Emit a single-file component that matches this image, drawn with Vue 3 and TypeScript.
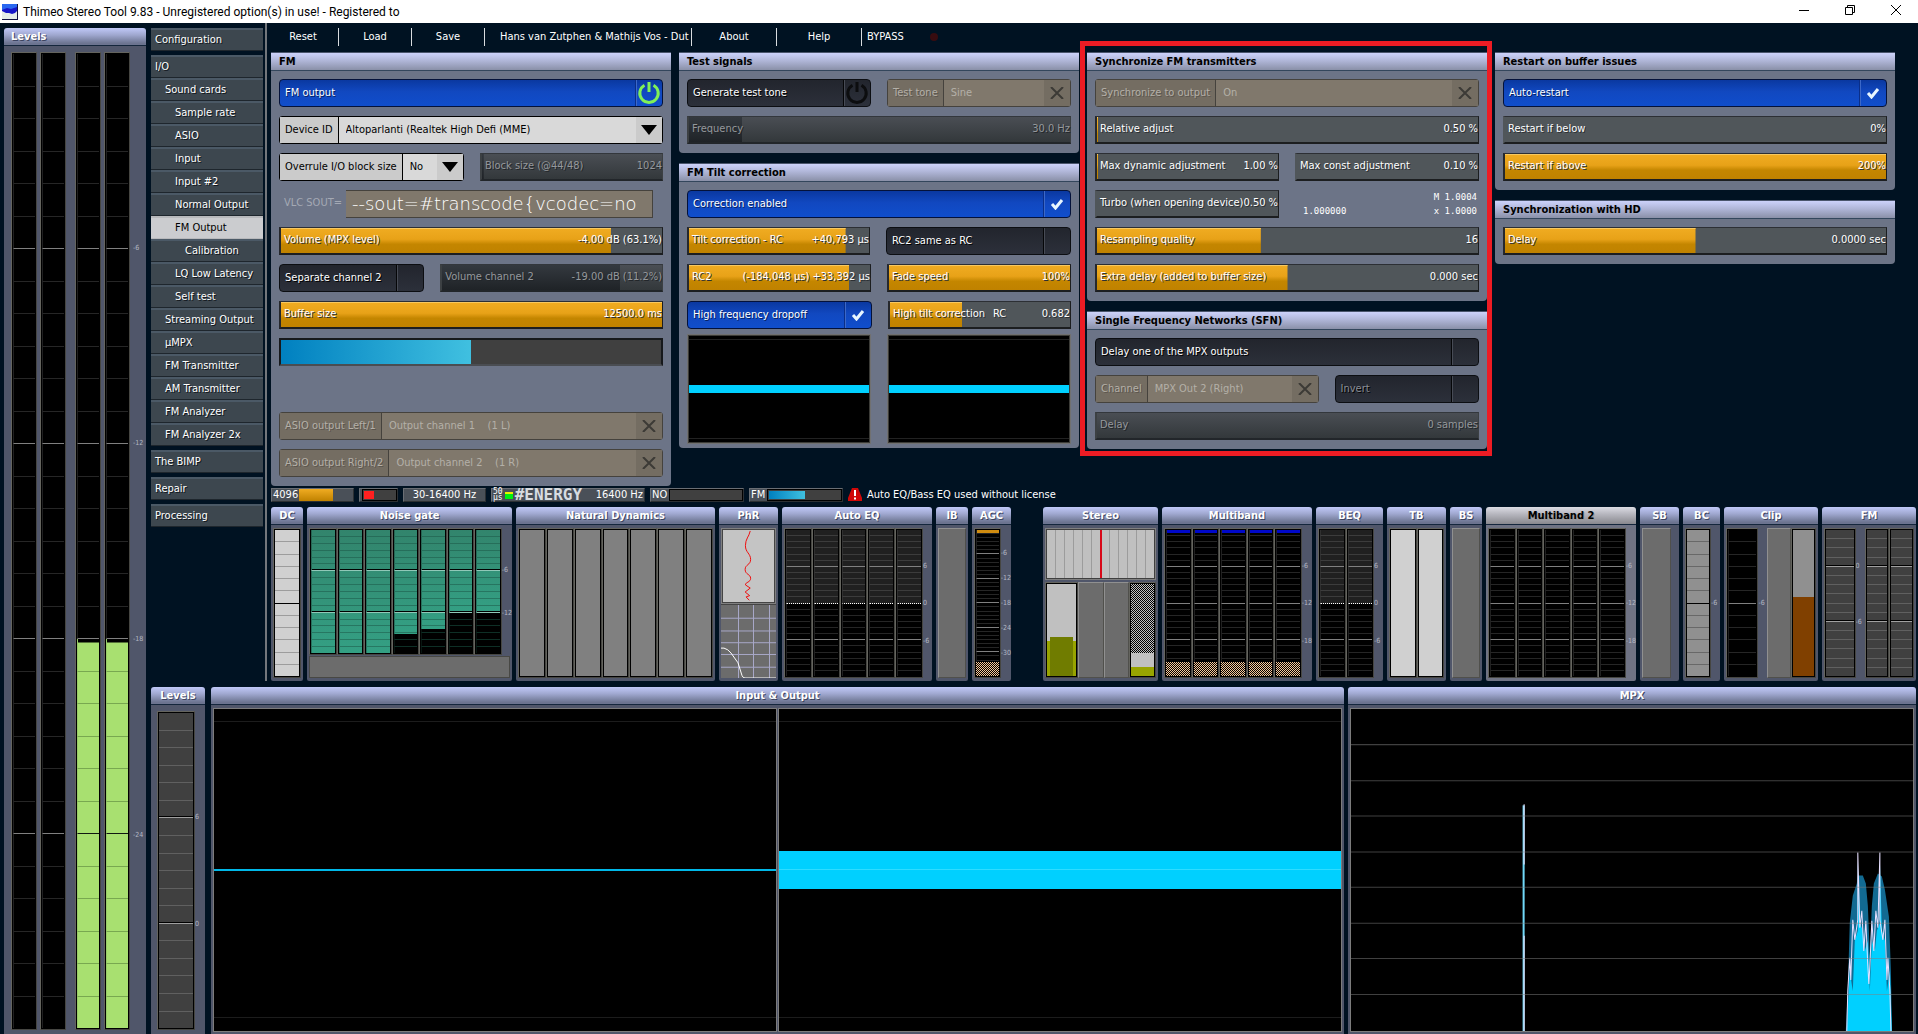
<script setup lang="ts">
interface NavItem { label: string; depth: number; gap?: boolean; active?: boolean }
interface Control {
  kind: 'toggle' | 'select' | 'slider' | 'progress' | 'blank' | 'graph' | 'vlc' | 'ratio'
  label?: string
  mid?: string
  value?: string
  span?: number
  fill?: number
  on?: boolean
  power?: boolean
  disabled?: boolean
}
interface Panel { title: string; rows: Control[][] }
interface Column {
  kind: 'meter' | 'scale' | 'flat' | 'space'
  look?: string
  cells?: number
  majors?: number[]
  level?: number
  hatch?: boolean
  grow?: number
  marks?: string[]
}
interface Strip { title: string; width: number; look?: string; gapAfter?: boolean; foot?: boolean; columns: Column[] }

const nav: NavItem[] = [
  { label: 'Configuration', depth: 0 },
  { label: 'I/O', depth: 0, gap: true },
  { label: 'Sound cards', depth: 1 },
  { label: 'Sample rate', depth: 2 },
  { label: 'ASIO', depth: 2 },
  { label: 'Input', depth: 2 },
  { label: 'Input #2', depth: 2 },
  { label: 'Normal Output', depth: 2 },
  { label: 'FM Output', depth: 2, active: true },
  { label: 'Calibration', depth: 3 },
  { label: 'LQ Low Latency', depth: 2 },
  { label: 'Self test', depth: 2 },
  { label: 'Streaming Output', depth: 1 },
  { label: 'µMPX', depth: 1 },
  { label: 'FM Transmitter', depth: 1 },
  { label: 'AM Transmitter', depth: 1 },
  { label: 'FM Analyzer', depth: 1 },
  { label: 'FM Analyzer 2x', depth: 1 },
  { label: 'The BIMP', depth: 0, gap: true },
  { label: 'Repair', depth: 0, gap: true },
  { label: 'Processing', depth: 0, gap: true },
]

const tools = [
  { label: 'Reset', size: 't-reset' },
  { label: 'Load', size: 't-load' },
  { label: 'Save', size: 't-load' },
  { label: 'Hans van Zutphen & Mathijs Vos - Dut', size: 't-name' },
  { label: 'About', size: 't-about' },
  { label: 'Help', size: 't-about' },
]

const boards: Panel[][] = [
  [
    {
      title: 'FM',
      rows: [
        [{ kind: 'toggle', label: 'FM output', on: true, power: true }],
        [{ kind: 'select', label: 'Device ID', value: 'Altoparlanti (Realtek High Defi (MME)' }],
        [
          { kind: 'select', label: 'Overrule I/O block size', value: 'No', span: 184 },
          { kind: 'slider', label: 'Block size (@44/48)', value: '1024', fill: 1, span: 184, disabled: true },
        ],
        [{ kind: 'vlc', label: 'VLC SOUT=', value: '--sout=#transcode{vcodec=no' }],
        [{ kind: 'slider', label: 'Volume (MPX level)', value: '-4.00 dB (63.1%)', fill: 86.6 }],
        [
          { kind: 'toggle', label: 'Separate channel 2', span: 144 },
          { kind: 'slider', label: 'Volume channel 2', value: '-19.00 dB (11.2%)', fill: 81, span: 224, disabled: true },
        ],
        [{ kind: 'slider', label: 'Buffer size', value: '12500.0 ms', fill: 100 }],
        [{ kind: 'progress', label: 'Buffer fill' }],
        [{ kind: 'blank' }],
        [{ kind: 'select', label: 'ASIO output Left/1', value: 'Output channel 1\u00a0\u00a0\u00a0 (1 L)', disabled: true }],
        [{ kind: 'select', label: 'ASIO output Right/2', value: 'Output channel 2\u00a0\u00a0\u00a0 (1 R)', disabled: true }],
      ],
    },
  ],
  [
    {
      title: 'Test signals',
      rows: [
        [
          { kind: 'toggle', label: 'Generate test tone', power: true, span: 184 },
          { kind: 'select', label: 'Test tone', value: 'Sine', span: 184, disabled: true },
        ],
        [{ kind: 'slider', label: 'Frequency', value: '30.0 Hz', fill: 14, disabled: true }],
      ],
    },
    {
      title: 'FM Tilt correction',
      rows: [
        [{ kind: 'toggle', label: 'Correction enabled', on: true }],
        [
          { kind: 'slider', label: 'Tilt correction - RC', value: '+40,793 µs', fill: 87, span: 184 },
          { kind: 'toggle', label: 'RC2 same as RC', span: 184 },
        ],
        [
          { kind: 'slider', label: 'RC2', value: '(-184,048 µs) +33,392 µs', fill: 88.6, span: 184 },
          { kind: 'slider', label: 'Fade speed', value: '100%', fill: 100, span: 184 },
        ],
        [
          { kind: 'toggle', label: 'High frequency dropoff', on: true, span: 184 },
          { kind: 'slider', label: 'High tilt correction', mid: 'RC', value: '0.682', fill: 40, span: 184 },
        ],
        [
          { kind: 'graph', span: 184 },
          { kind: 'graph', span: 184 },
        ],
      ],
    },
  ],
  [
    {
      title: 'Synchronize FM transmitters',
      rows: [
        [{ kind: 'select', label: 'Synchronize to output', value: 'On', disabled: true }],
        [{ kind: 'slider', label: 'Relative adjust', value: '0.50 %', fill: 0.3 }],
        [
          { kind: 'slider', label: 'Max dynamic adjustment', value: '1.00 %', fill: 0.6, span: 184 },
          { kind: 'slider', label: 'Max const adjustment', value: '0.10 %', fill: 0, span: 184 },
        ],
        [
          { kind: 'slider', label: 'Turbo (when opening device)', value: '0.50 %', fill: 0, span: 184 },
          { kind: 'ratio', span: 184 },
        ],
        [{ kind: 'slider', label: 'Resampling quality', value: '16', fill: 43 }],
        [{ kind: 'slider', label: 'Extra delay (added to buffer size)', value: '0.000 sec', fill: 50 }],
      ],
    },
    {
      title: 'Single Frequency Networks (SFN)',
      rows: [
        [{ kind: 'toggle', label: 'Delay one of the MPX outputs' }],
        [
          { kind: 'select', label: 'Channel', value: 'MPX Out 2 (Right)', span: 224, disabled: true },
          { kind: 'toggle', label: 'Invert', span: 144, disabled: true },
        ],
        [{ kind: 'slider', label: 'Delay', value: '0 samples', fill: 0, disabled: true }],
      ],
    },
  ],
  [
    {
      title: 'Restart on buffer issues',
      rows: [
        [{ kind: 'toggle', label: 'Auto-restart', on: true }],
        [{ kind: 'slider', label: 'Restart if below', value: '0%', fill: 0 }],
        [{ kind: 'slider', label: 'Restart if above', value: '200%', fill: 100 }],
      ],
    },
    {
      title: 'Synchronization with HD',
      rows: [[{ kind: 'slider', label: 'Delay', value: '0.0000 sec', fill: 50 }]],
    },
  ],
]

const meters = (count: number, look: string, cells: number, majors: number[], extra: Partial<Column> = {}): Column[] =>
  Array.from({ length: count }, () => ({ kind: 'meter' as const, look, cells, majors, ...extra }))
const scale = (...marks: string[]): Column => ({ kind: 'scale', marks })
const gateLevels = [100, 100, 100, 84, 80, 67, 67]

const strips: Strip[] = [
  { title: 'DC', width: 32, columns: meters(1, 'pale', 12, [6]) },
  {
    title: 'Noise gate', width: 205, foot: true,
    columns: [
      ...gateLevels.map((level): Column => ({ kind: 'meter', look: 'gate', cells: 18, majors: [6, 12], level })),
      scale('-6', '-12'),
    ],
  },
  { title: 'Natural Dynamics', width: 199, columns: meters(7, 'grey', 0, []) },
  { title: 'PhR', width: 59, look: 'phase', columns: [] },
  { title: 'Auto EQ', width: 150, columns: [...meters(5, 'eq', 24, [6, 12, 18]), scale('6', '0', '-6')] },
  { title: 'IB', width: 32, columns: [{ kind: 'flat' }] },
  {
    title: 'AGC', width: 39, gapAfter: true,
    columns: [...meters(1, 'black agc', 36, [6, 12, 18, 24, 30], { hatch: true }), scale('-6', '-12', '-18', '-24', '-30')],
  },
  { title: 'Stereo', width: 115, look: 'stereo', columns: [] },
  {
    title: 'Multiband', width: 150,
    columns: [...meters(5, 'black blue', 24, [6, 12, 18], { hatch: true }), scale('-6', '-12', '-18')],
  },
  { title: 'BEQ', width: 67, columns: [...meters(2, 'eq', 24, [6, 12, 18]), scale('6', '0', '-6')] },
  { title: 'TB', width: 59, columns: meters(2, 'pale', 0, []) },
  { title: 'BS', width: 32, columns: [{ kind: 'flat' }] },
  { title: 'Multiband 2', width: 150, look: 'picked', columns: [...meters(5, 'black', 24, [6, 12, 18]), scale('-6', '-12', '-18')] },
  { title: 'SB', width: 39, columns: [{ kind: 'flat' }, { kind: 'space' }] },
  { title: 'BC', width: 37, columns: [...meters(1, 'mid', 12, [6]), scale('-6')] },
  {
    title: 'Clip', width: 94,
    columns: [
      ...meters(1, 'black', 12, [6], { grow: 4 }), scale('-6'),
      { kind: 'flat', grow: 3 }, ...meters(1, 'brown', 0, [], { grow: 3 }),
    ],
  },
  {
    title: 'FM', width: 94,
    columns: [
      ...meters(1, 'dark', 16, [4, 10], { grow: 8 }), scale('', '', '', '0', '', '', '', '', '', '-6', '', '', '', '', ''),
      ...meters(2, 'dark', 16, [4, 10], { grow: 6 }),
    ],
  },
]

const majors30 = [6, 12, 18, 24]
const uid = (a: number, b: number, c: number, d: number) => `ctl-${a}-${b}-${c}-${d}`
</script>

<template>
  <div class="window">
    <header class="titlebar">
      <svg class="app-icon" viewBox="0 0 16 16" aria-hidden="true">
        <rect width="16" height="16" fill="#e4ece8" />
        <path d="M0 0h15v7l-2 2-3 1-3-1H4L0 7z" fill="#1616c8" />
        <path d="M0 0h15v3L9 5 5 4 0 6z" fill="#2a68f0" />
        <path d="M15 0h1v16H0v-1h15z" fill="#101040" />
      </svg>
      <h1>Thimeo Stereo Tool 9.83 - Unregistered option(s) in use! - Registered to</h1>
      <div class="win-buttons">
        <button type="button" aria-label="Minimize">
          <svg viewBox="0 0 10 10"><path d="M0 5.5h10" /></svg>
        </button>
        <button type="button" aria-label="Restore">
          <svg viewBox="0 0 10 10"><path d="M.5 2.5h7v7h-7zM2.500 2.500v-2h7v7h-2" /></svg>
        </button>
        <button type="button" aria-label="Close">
          <svg viewBox="0 0 10 10"><path d="M0 0l10 10M10 0L0 10" /></svg>
        </button>
      </div>
    </header>

    <div class="desk">
      <section class="box levels">
        <h2 class="cap left">Levels</h2>
        <div class="box-body levels-body">
          <div v-for="n in 4" :key="n" class="meter tall" :class="{ lit: n > 2, pair: n === 3 }">
            <i v-for="c in 30" :key="c" :class="{ major: majors30.includes(c) }"></i>
          </div>
          <div class="scale">
            <span>-6</span><span>-12</span><span>-18</span><span>-24</span>
          </div>
        </div>
      </section>

      <div class="right">
        <div class="upper">
          <nav class="nav">
            <a v-for="item in nav" :key="item.label" href="#" :class="['d' + item.depth, { gap: item.gap, active: item.active }]">{{ item.label }}</a>
          </nav>

          <main class="main">
            <div class="toolbar">
              <button v-for="t in tools" :key="t.label" type="button" :class="t.size">{{ t.label }}</button>
              <button type="button" class="bypass">BYPASS<i class="lamp"></i></button>
            </div>

            <div class="boards">
              <div v-for="(column, a) in boards" :key="a" class="board">
                <section v-for="(panel, b) in column" :key="panel.title" class="panel">
                  <h2>{{ panel.title }}</h2>
                  <div class="rows">
                    <div v-for="(row, c) in panel.rows" :key="c" class="row">
                      <template v-for="(ctl, d) in row" :key="d">
                        <div
                          v-if="ctl.kind === 'toggle'" class="ctl toggle"
                          :class="[{ on: ctl.on, disabled: ctl.disabled }, 's' + (ctl.span ?? 384)]"
                        >
                          <label :for="uid(a, b, c, d)">{{ ctl.label }}</label>
                          <span class="tick">
                            <input :id="uid(a, b, c, d)" type="checkbox" :checked="ctl.on" :disabled="ctl.disabled" />
                            <svg v-if="ctl.power" class="power" viewBox="0 0 24 24"><path d="M7.500 4.200a9.200 9.200 0 1 0 9 0M12 1v10" /></svg>
                            <svg v-else-if="ctl.on" class="check" viewBox="0 0 14 12"><path d="M2 6l3.500 4L12 2" /></svg>
                          </span>
                        </div>

                        <div
                          v-else-if="ctl.kind === 'select'" class="ctl pick"
                          :class="[{ disabled: ctl.disabled }, 's' + (ctl.span ?? 384)]"
                        >
                          <label :for="uid(a, b, c, d)">{{ ctl.label }}</label>
                          <select :id="uid(a, b, c, d)" :disabled="ctl.disabled"><option>{{ ctl.value }}</option></select>
                          <span class="drop">
                            <svg v-if="ctl.disabled" class="cross" viewBox="0 0 14 12"><path d="M1 0l12 12M13 0L1 12" /></svg>
                            <svg v-else class="arrow" viewBox="0 0 16 10"><path d="M0 0h16L8 10z" /></svg>
                          </span>
                        </div>

                        <div
                          v-else-if="ctl.kind === 'slider'" class="ctl slider"
                          :class="[{ disabled: ctl.disabled, empty: !ctl.fill }, 's' + (ctl.span ?? 384)]"
                          :style="{ '--fill': ctl.fill + '%' }"
                        >
                          <input :id="uid(a, b, c, d)" type="range" :value="ctl.fill" :disabled="ctl.disabled" />
                          <div class="caption">
                            <label :for="uid(a, b, c, d)">{{ ctl.label }}</label>
                            <span v-if="ctl.mid" class="mid">{{ ctl.mid }}</span>
                            <output>{{ ctl.value }}</output>
                          </div>
                        </div>

                        <div v-else-if="ctl.kind === 'vlc'" class="ctl vlc s384">
                          <label :for="uid(a, b, c, d)">{{ ctl.label }}</label>
                          <input :id="uid(a, b, c, d)" type="text" :value="ctl.value" disabled />
                        </div>

                        <div v-else-if="ctl.kind === 'ratio'" class="ctl ratio s184">
                          <span class="single">1.000000</span>
                          <span class="pairs"><b>M 1.0004</b><b>x 1.0000</b></span>
                        </div>

                        <div v-else-if="ctl.kind === 'progress'" class="ctl progress s384" role="img" :aria-label="ctl.label"></div>
                        <div v-else-if="ctl.kind === 'graph'" class="graph s184"><i></i></div>
                        <div v-else class="ctl s384"></div>
                      </template>
                    </div>
                  </div>
                </section>
                <div v-if="a === 2" class="marker"></div>
              </div>
            </div>

            <div class="status">
              <div class="cell st-block"><span>4096</span><i class="amber"></i></div>
              <div class="cell st-red"><i class="well"><b></b></i></div>
              <div class="cell st-band">30-16400 Hz</div>
              <div class="cell st-rds">
                <span class="tiny">50<br />µs</span><i class="led"></i>
                <span class="lcd">#ENERGY</span><span class="push">16400 Hz</span>
              </div>
              <div class="cell st-no"><span>NO</span><i class="well"></i></div>
              <div class="cell st-no fm"><span>FM</span><i class="well"><b></b></i></div>
              <svg class="warn" viewBox="0 0 14 13"><path d="M4 0h6l4 10v3H0v-3z" fill="#d00808" /><path d="M7 2v6M7 9.500v2" stroke="#fff" stroke-width="2" /></svg>
              <span class="notice">Auto EQ/Bass EQ used without license</span>
            </div>

            <div class="strips">
              <section v-for="s in strips" :key="s.title + s.width" class="box strip" :class="[s.look, { late: s.gapAfter }]" :style="{ flexGrow: s.width }">
                <h2 class="cap">{{ s.title }}</h2>
                <div class="box-body strip-body">
                  <template v-if="s.look === 'phase'">
                    <svg class="ph-top" viewBox="0 0 55 75" preserveAspectRatio="none">
                      <path d="M29.300 2C28 8 24.300 10 24.300 17S29.700 25 29.700 31 24 36 24 41.300 29.700 46 29.700 50.300 24.300 54 24.300 57l5 3.300-5.300 4 4.700 3.700-3.700 1.300 3.300 3.400" />
                    </svg>
                    <svg class="ph-low" viewBox="0 0 55 75" preserveAspectRatio="none">
                      <path d="M0 13.500h55M0 26.500h55M0 38.500h55M0 50.500h55M0 63.500h55M17.500 0v75M32.500 0v75M48.500 0v75" stroke="#a8a8c8" />
                      <path d="M0 44h3q4 1 7 5l7 10 4 13q1 2.500 3 2.500h31" stroke="#fff" />
                    </svg>
                  </template>
                  <template v-else-if="s.look === 'stereo'">
                    <div class="pan"><i v-for="n in 12" :key="n"></i></div>
                    <div class="columns st-low">
                      <div class="meter olive"><b></b></div>
                      <div class="flat"></div>
                      <div class="flat"></div>
                      <div class="meter noise"></div>
                    </div>
                  </template>
                  <template v-else>
                    <div class="columns">
                      <template v-for="(col, k) in s.columns" :key="k">
                        <div
                          v-if="col.kind === 'meter'" class="meter" :class="col.look"
                          :style="{ flexGrow: col.grow ?? 1, '--level': (col.level ?? 0) + '%' }"
                        >
                          <i v-for="n in col.cells" :key="n" :class="{ major: col.majors?.includes(n), upper: n <= 12 }"></i>
                          <b v-if="col.hatch" class="hatch"></b>
                        </div>
                        <div v-else-if="col.kind === 'scale'" class="scale">
                          <span v-for="(m, j) in col.marks" :key="j">{{ m }}</span>
                        </div>
                        <div v-else-if="col.kind === 'flat'" class="flat" :style="{ flexGrow: col.grow ?? 1 }"></div>
                        <div v-else class="spacer"></div>
                      </template>
                    </div>
                    <div v-if="s.foot" class="foot"></div>
                  </template>
                </div>
              </section>
            </div>
          </main>
        </div>

        <div class="lower">
          <section class="box small-levels">
            <h2 class="cap">Levels</h2>
            <div class="box-body levels-body small">
              <div class="meter dark">
                <i v-for="c in 18" :key="c" :class="{ major: c % 6 === 0 && c < 18 }"></i>
              </div>
              <div class="scale"><span>6</span><span>0</span></div>
            </div>
          </section>
          <section class="box io">
            <h2 class="cap">Input &amp; Output</h2>
            <div class="box-body scopes">
              <div class="scope thin-line"><i></i></div>
              <div class="scope band"><i></i></div>
            </div>
          </section>
          <section class="box mpx">
            <h2 class="cap">MPX</h2>
            <div class="box-body scopes">
              <svg class="spectrum" viewBox="0 0 560 321" preserveAspectRatio="none">
                <rect width="560" height="321" fill="#000" />
                <path d="M493 321l2-40 2-68 3-27 4-12 1-8 5 0 3 8 2 22 2 50 2-50 2-22 4-10 4 3 3 13 4 27 2 54 1 60z" fill="#126a92" />
                <path d="M494 321l3-60 3 20 2-50 3-10 0-70 2 62 3 8 2 20 3-10 2 50 2-50 3 10 2-20 3-8 0-62 2 70 3 10 2 50 3-20 2 60z" fill="#00d0ff" />
                <path d="M494 321l1-40 2-33 1 22 2-60 2 20 3-20V143l2 75 2-17 2 40 2-30 2 45 1 18 1-18 2-45 2 30 2-40 2 17 2-75v67l3 20 2-20 2 60 1-22 2 33 1 40" fill="none" stroke="#e8e0ff" />
                <path d="M172 96v225" stroke="#70d8f8" stroke-width="2" />
                <path d="M172.500 95v60M172.500 226v95" stroke="#f4e4ff" />
                <path d="M0 35.500h560M0 71.500h560M0 106.500h560M0 142.500h560M0 177.500h560M0 213.500h560M0 248.500h560M0 284.500h560" stroke="#808080" stroke-opacity=".5" />
              </svg>
            </div>
          </section>
        </div>
      </div>
    </div>
  </div>
</template>

<style>
html,
body {
  background: #001222;
}
</style>

<style scoped>
.window {
  display: flex;
  flex-direction: column;
  min-height: 100vh;
  background: #001222;
  color: #fff;
  font: 11px/14px "DejaVu Sans Condensed", "DejaVu Sans", sans-serif;
  overflow: hidden;
}
* { box-sizing: border-box; }
h1, h2 { margin: 0; }
button, input, select { font: inherit; color: inherit; margin: 0; }
svg { display: block; }

.titlebar {
  display: flex;
  align-items: center;
  height: 23px;
  padding: 0 12px 0 2px;
  background: #fff;
  color: #000;
}
.app-icon { width: 16px; height: 16px; margin-right: 5px; }
.titlebar h1 { flex: 1; font: 12px/16px Roboto, "Open Sans", sans-serif; }
.win-buttons { display: flex; gap: 26px; align-self: flex-start; padding-top: 1px; }
.win-buttons button { width: 20px; height: 18px; padding: 4px 5px; border: 0; background: none; }
.win-buttons svg { width: 10px; height: 10px; overflow: visible; fill: none; stroke: #000; }

.desk { flex: 1; display: flex; gap: 5px; padding: 0 2px 0 4px; }
.levels { width: 142px; margin-top: 5px; }
.right { flex: 1; min-width: 0; display: flex; flex-direction: column; gap: 6px; }
.upper { display: flex; }

.nav {
  display: flex;
  flex-direction: column;
  width: 116px;
  padding: 5px 2px 0 0;
  border-right: 2px solid #73777c;
}
.nav a {
  height: 23px;
  padding: 3px 0 0 4px;
  border: solid;
  border-width: 2px 0 1px;
  border-color: #4b5966 transparent #1e262d;
  background: #3d474f;
  color: #fff;
  line-height: 14px;
  text-decoration: none;
  text-shadow: 1px 1px 0 #12181e;
}
.nav a.gap { margin-top: 4px; }
.nav a.d1 { padding-left: 14px; }
.nav a.d2 { padding-left: 24px; }
.nav a.d3 { padding-left: 34px; }
.nav a.active { background: #cbcccf; border-color: #b8b9bc; color: #000; text-shadow: none; }

.main { flex: 1; min-width: 0; padding-left: 4px; }
.toolbar { display: flex; height: 29px; padding: 5px 0 6px; }
.toolbar button {
  padding: 0 7px;
  border: 0;
  border-right: 1px solid #d8dce0;
  background: none;
  line-height: 16px;
  text-align: center;
  white-space: nowrap;
}
.toolbar .t-reset { width: 68px; padding: 0 10px 0 7px; }
.toolbar .t-load { width: 73px; }
.toolbar .t-name { width: 207px; padding: 0 0 0 15px; text-align: left; }
.toolbar .t-about { width: 85px; }
.toolbar .bypass { display: flex; align-items: center; gap: 26px; padding: 0 5px; border: 0; }
.lamp { width: 8px; height: 8px; border-radius: 4px; background: #380c10; }

.boards { display: grid; grid-template-columns: repeat(4, minmax(0, 1fr)); gap: 8px; align-items: start; padding-right: 21px; }
.board { position: relative; display: flex; flex-direction: column; gap: 10px; }
.marker { position: absolute; inset: -11px -5px -7px -7px; border: 5px solid #ed1c24; pointer-events: none; }
.panel { background: #6c7487; border-radius: 0 0 4px 4px; }
.panel h2 {
  height: 19px;
  padding: 0 8px;
  border: solid;
  border-width: 1px 0;
  border-color: #4a556c #6c7487 #33465c;
  background: linear-gradient(#ccd2fa, #b0b6d8 45%, #8a90a8);
  color: #000;
  font-size: 11px;
  line-height: 17px;
  text-shadow: 1px 1px 0 #a0a8c4;
}
.rows { display: flex; flex-direction: column; gap: 9px; padding: 8px 8px 9px; }
.row { display: flex; gap: 16px; }
.row:has(.graph) { margin: -4px 0 -5px; }
.ctl { height: 28px; min-width: 0; }
.s144 { flex: 144 1 0; }
.s184 { flex: 184 1 0; }
.s224 { flex: 224 1 0; }
.s384 { flex: 384 1 0; }

.toggle {
  display: flex;
  border: 1px solid #0c0e12;
  border-radius: 4px;
  background: linear-gradient(#22252d, #2c303a);
  text-shadow: 1px 1px 0 #000;
}
.toggle label { flex: 1; padding: 0 5px; line-height: 25px; white-space: nowrap; }
.toggle.on { border-color: #04123a; background: linear-gradient(#0a38a0, #1148c0 45%, #104ecc); text-shadow: 1px 1px 0 #062060; }
.toggle.disabled { color: #8b8e96; }
.tick { display: grid; width: 27px; border-left: 1px solid #050608; box-shadow: inset 1px 0 0 #474b55; place-items: center; }
.on .tick { border-left-color: #0a2e88; box-shadow: inset 1px 0 0 #3c68c8; }
.tick input { grid-area: 1 / 1; width: 26px; height: 26px; appearance: none; }
.tick svg { grid-area: 1 / 1; pointer-events: none; fill: none; }
.power { width: 24px; height: 24px; stroke: #0c0d0f; stroke-width: 3; }
.on .power { stroke: #80f058; }
.check { width: 14px; height: 12px; stroke: #e8f6ff; stroke-width: 3; }

.pick {
  display: flex;
  border: 1px solid #000;
  border-radius: 3px;
  background: #d9d9d9;
  color: #000;
}
.pick label { padding: 0 5px; border-right: 1px solid #000; background: #cbcbcb; line-height: 25px; white-space: nowrap; }
.pick select {
  flex: 1;
  min-width: 0;
  padding: 0 0 1px 7px;
  border: 0;
  background: none;
  appearance: none;
  opacity: 1;
}
.drop { display: grid; width: 26px; background: #cbcbcb; place-items: center; }
.arrow { width: 16px; height: 10px; }
.cross { width: 14px; height: 12px; fill: none; stroke: #3c3a36; stroke-width: 2; }
.pick.disabled { border-color: #45423d; background: #80786c; color: #b4b0a8; text-shadow: 1px 1px 0 #5c564e; }
.pick.disabled label { border-color: #45423d; background: #746d62; }
.pick.disabled .drop { background: #746d62; }

.slider { display: grid; grid-template-columns: minmax(0, 1fr); color: #fff; text-shadow: 1px 1px 0 #2c3034; }
.slider input, .caption { grid-area: 1 / 1; }
.slider input {
  width: 100%;
  height: 28px;
  appearance: none;
  border: solid;
  border-width: 1px 1px 2px 2px;
  border-color: #2c2f34 #1c1e20 #1c1e20 #26282c;
  background:
    linear-gradient(#f8c860, #f8c860) 0 0 / var(--fill) 1px no-repeat,
    linear-gradient(#f0ac22, #e8a218 45%, #c48600 65%, #c08200) 0 0 / var(--fill) 100% no-repeat,
    #50565a;
}
.slider.empty input { border-left-color: #50565a; }
.slider input::-webkit-slider-thumb { appearance: none; width: 1px; height: 1px; }
.slider.disabled { color: #95989c; text-shadow: 1px 1px 0 #22262a; }
.slider.disabled input {
  border-color: #33373c #3c4043 #22262a #3c4043;
  background:
    linear-gradient(#34393f, #1f2327) 0 0 / var(--fill) 100% no-repeat,
    linear-gradient(#4a4e54, #33383b);
}
.caption { display: flex; justify-content: space-between; padding: 0 1px 0 5px; line-height: 26px; white-space: nowrap; pointer-events: none; }
.caption .mid { flex: 1; padding-left: 8px; }

.vlc { display: flex; padding-right: 10px; }
.vlc label { width: 67px; padding-left: 5px; color: #a4a9b4; line-height: 26px; }
.vlc input {
  flex: 1;
  min-width: 0;
  padding: 0 6px;
  border: solid #45423d;
  border-width: 1px 1px 1px 0;
  background: #80786c;
  color: #fff;
  font: 200 18px/24px "DejaVu Sans Light", "DejaVu Sans", sans-serif;
}

.ratio { display: flex; justify-content: space-between; align-items: flex-end; font: 9px/14px "DejaVu Sans Mono", monospace; }
.ratio .single { margin-left: 8px; }
.ratio .pairs { margin-right: 2px; }
.ratio b { display: block; font-weight: 400; }
.progress {
  border: 2px solid #000;
  border-color: #17191c #17191c #4a4d52;
  background: linear-gradient(90deg, #0080c0, #40c0e0) 0 0 / 50% 100% no-repeat, #404040;
}
.graph { display: flex; align-items: center; height: 110px; border: 1px solid #707070; outline: 1px solid #3c3c38; outline-offset: -2px; background: linear-gradient(#222, #222) 0 4px / 100% 1px no-repeat, linear-gradient(#222, #222) 0 103px / 100% 1px no-repeat, #000; }
.graph i { flex: 1; height: 8px; margin: 0 1px; background: #00d0ff; }

.status { display: flex; gap: 5px; height: 14px; margin-top: 2px; line-height: 12px; }
.cell { display: flex; align-items: center; border: 1px solid #6a6e74; border-right-color: #2c3034; border-bottom-color: #2c3034; background: #4a5058; white-space: nowrap; }
.st-block { width: 83px; padding-left: 1px; }
.amber { width: 34px; height: 12px; margin-left: 1px; background: linear-gradient(#f0ac22, #c08200); }
.st-red { width: 39px; padding-left: 2px; }
.well { flex: 1; height: 12px; padding: 1px; border: 1px solid #000; background: #404040; }
.well b { display: block; height: 100%; }
.st-red .well b { width: 10px; background: #ff2020; }
.st-band { width: 83px; justify-content: center; }
.st-rds { width: 154px; padding: 0 1px; }
.tiny { font: 8px/6px "DejaVu Sans Mono", monospace; }
.led { width: 8px; height: 7px; margin: 0 2px; background: linear-gradient(#e8f000 2px, #00f010 0); }
.lcd { font: 700 16px/12px "DejaVu Sans Mono", monospace; color: #d8dce0; }
.push { margin-left: auto; }
.st-no { width: 94px; padding-left: 1px; }
.st-no .well { margin-left: 2px; }
.fm .well b { width: 50%; background: linear-gradient(90deg, #0080c0, #40c0e0); }
.warn { width: 14px; height: 13px; }
.notice { line-height: 14px; white-space: nowrap; }

.box { display: flex; flex-direction: column; min-width: 0; }
.cap {
  height: 18px;
  border-bottom: 1px solid #14263c;
  border-radius: 3px 3px 0 0;
  background: linear-gradient(#c0c8f8, #a0a8d0 40%, #6c7490 90%);
  color: #fff;
  font-size: 11px;
  line-height: 17px;
  text-align: center;
  text-shadow: 1px 1px 0 #3c4460;
  white-space: nowrap;
}
.cap.left { padding-left: 7px; text-align: left; }
.box-body { flex: 1; background: #50566a; }
.levels-body { display: flex; gap: 3px; padding: 6px 0 4px 7px; }
.levels-body .tall { flex: 0 0 26px; }
.levels-body .pair { margin-left: 6px; }
.levels-body.small { gap: 0; padding-left: 6px; }
.small .meter { flex: 0 0 38px; }

.meter {
  position: relative;
  flex: 1 1 0;
  min-width: 0;
  display: flex;
  flex-direction: column;
  padding: 1px;
  border: 1px solid #64645e;
  border-right-color: #464642;
  border-bottom-color: #464642;
  box-shadow: inset 0 0 0 1px #000;
  background: #000;
}
.meter i { flex: 1 1 0; border-left: 1px solid #202020; border-bottom: 1px solid #262626; }
.meter i:last-of-type { border-bottom: 0; }
.meter i.major { border-bottom-color: #808080; }
.tall.lit { background: linear-gradient(#000, #000) 0 0 / 100% 60.4% no-repeat, #a8e070; }
.tall.lit i:nth-of-type(n + 19) { border-left-color: #98cc68; border-bottom-color: #78a850; }
.tall.lit i.major:nth-of-type(n + 19) { border-bottom-color: #101810; }
.meter.pale { background: #d0d0d0; }
.meter.pale i { border-left: 0; border-bottom-color: #9c9c9c; }
.meter.pale i.major { border-bottom-color: #000; }
.meter.mid { background: #909090; }
.meter.mid i { border-left: 0; border-bottom-color: #686868; }
.meter.mid i.major { border-bottom-color: #000; }
.meter.grey { background: #808080; }
.meter.dark { background: #404040; }
.meter.dark i { border-left: 0; border-bottom-color: #606060; }
.meter.dark i.major { border-bottom-color: #a0a0a0; box-shadow: inset 0 -1px 0 #000; }
.meter.brown { background: linear-gradient(#909090 46%, #804000 0); }
.meter.gate { background: linear-gradient(#32846c, #34a084) 0 0 / 100% var(--level) no-repeat, #000; }
.meter.gate i { border-left-color: #14362c66; border-bottom-color: #1c584888; }
.meter.gate i.major { border-bottom-color: #90c8b8; box-shadow: inset 0 -1px 0 #000; }
.meter.eq i.upper { border-left-color: #303030; border-bottom-color: #3c3c3c; background: #202020; }
.meter.eq i.major { border-bottom-color: #808080; }
.meter.eq i.major:nth-of-type(12) { border-bottom: 1px dotted #fff; }
.meter.agc { background: linear-gradient(#d08c10, #d08c10) 1px 1px / 100% 4px no-repeat, #000; }
.meter.blue { background: linear-gradient(#0008c8, #0008c8) 1px 1px / 100% 3px no-repeat, #000; }
.hatch {
  position: absolute;
  inset: auto 1px 1px;
  height: 14px;
  background: conic-gradient(#000 25%, #f8c898 0 50%, #000 0 75%, #f8c898 0) 0 0 / 2px 2px;
}
.flat { flex: 1 1 0; border: 1px solid #909090; border-right-color: #50504c; border-bottom-color: #50504c; background: #6c6c6c; }
.spacer { flex: 0 0 6px; }
.scale {
  flex: 0 0 9px;
  display: flex;
  flex-direction: column;
  justify-content: space-evenly;
  color: #b4b8c4;
  font: 7px/0 "DejaVu Sans Condensed", "DejaVu Sans", sans-serif;
  white-space: nowrap;
}
.scale span { height: 0; }

.strips { display: flex; gap: 4px; height: 174px; margin-top: 5px; }
.strip { flex: 1 1 0; }
.strip.late { margin-right: 28px; }
.strip-body { display: flex; flex-direction: column; padding: 3px 2px; border-radius: 0 0 2px 2px; }
.strip .scale:last-child { margin-right: -2px; }
.columns { flex: 1; display: flex; min-height: 0; }
.foot { height: 22px; margin-top: 1px; border: 1px solid #484844; background: #6c6c6c; }
.picked .cap { background: linear-gradient(#dcdce4, #b8b8c0 40%, #88888e); color: #000; text-shadow: 1px 1px 0 #989898; }
.picked .strip-body { background: #6f7384; }
.ph-top, .ph-low { flex: 1 1 0; width: 100%; min-height: 0; fill: none; }
.ph-top { border: 1px solid #808080; outline: 1px solid #444; outline-offset: -2px; background: #c4c4c4; stroke: #f00808; }
.ph-low { background: #6c6c6c; border-top: 1px solid #444; }
.pan { display: flex; height: 52px; padding: 1px; border: 1px solid #808080; outline: 1px solid #404040; outline-offset: -2px; background: #c0c0c0; }
.pan i { flex: 1; border-right: 1px solid #9c9c9c; }
.pan i:last-child { border: 0; }
.pan i:nth-child(6) { border-right: 2px solid #d80818; }
.st-low { margin-top: 2px; }
.meter.olive { padding: 1px 4px; background: linear-gradient(#c0c0c0 62%, #98a400 0); justify-content: flex-end; }
.olive b { height: 42%; background: #707c00; }
.meter.noise {
  background:
    linear-gradient(#98a400, #98a400) 0 100% / 100% 10px no-repeat,
    linear-gradient(#c0c0c0, #c0c0c0) 0 100% / 100% 24px no-repeat,
    conic-gradient(#000 25%, #c0c0c0 0 50%, #000 0 75%, #c0c0c0 0) 0 0 / 2px 2px;
}

.lower { flex: 1; display: flex; gap: 4px; min-height: 340px; }
.small-levels { width: 54px; margin-right: 2px; }
.io { flex: 1133 1 0; }
.mpx { flex: 568 1 0; }
.scopes { display: flex; gap: 1px; padding: 3px 2px 2px; }
.scope, .spectrum { flex: 1 1 0; min-width: 0; border: 1px solid #7c7c7c; }
.scope { display: flex; align-items: center; background: linear-gradient(#1c1c1c, #1c1c1c) 0 12px / 100% 1px no-repeat, linear-gradient(#1c1c1c, #1c1c1c) 0 308px / 100% 1px no-repeat, #000; }
.scope i { flex: 1; height: 2px; background: #00b8e8; }
.scope.band i { height: 38px; background: linear-gradient(#00d0ff 18px, #30dcff 0 19px, #00d0ff 0); }
.spectrum { height: auto; align-self: stretch; }
</style>
